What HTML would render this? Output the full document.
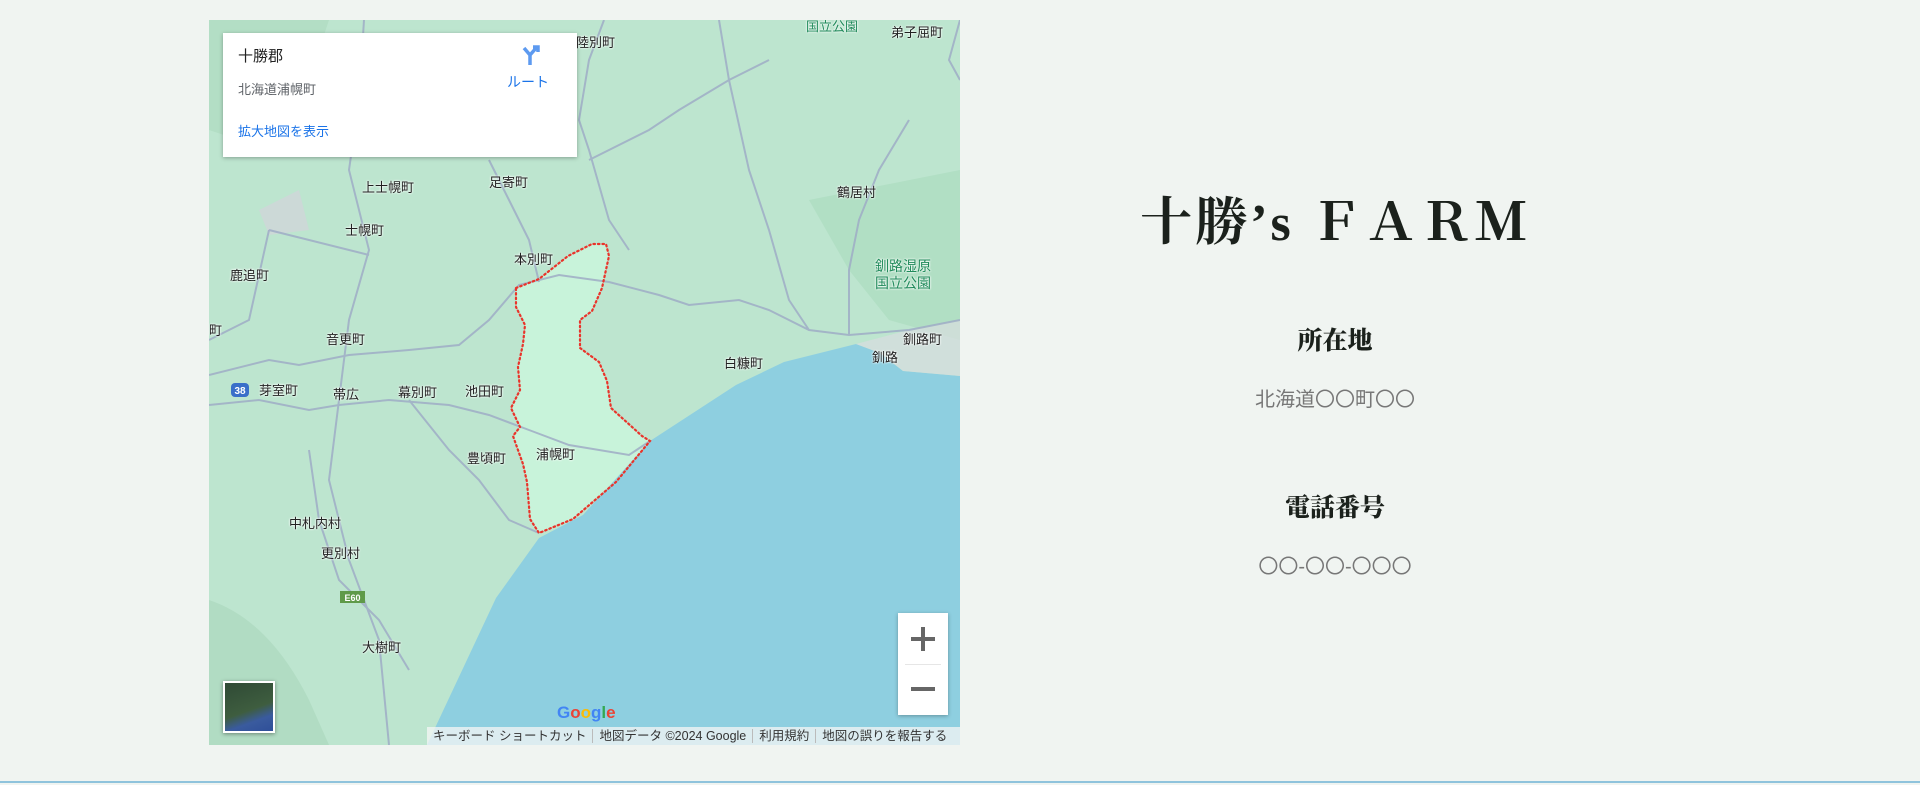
<!DOCTYPE html>
<html><head><meta charset="utf-8"><style>
html,body{margin:0;padding:0}
body{width:1920px;height:785px;background:#f0f4f1;position:relative;overflow:hidden;font-family:"Liberation Sans","Noto Sans CJK JP",sans-serif}
#map{position:absolute;left:209px;top:20px;width:751px;height:725px;overflow:hidden;background:#bde5cf}
.card{position:absolute;left:14px;top:13px;width:354px;height:124px;background:#fff;box-shadow:0 1px 4px rgba(0,0,0,.3)}
.t{position:absolute;font-size:13px;color:#222;white-space:nowrap;text-shadow:0 0 2px #fff,0 0 2px #fff}
.zoom{position:absolute;left:689px;top:593px;width:50px;height:102px;background:#fff;box-shadow:0 1px 4px rgba(0,0,0,.3)}
.layer{position:absolute;left:14px;top:661px;width:48px;height:48px;border:2px solid #fff;box-shadow:0 1px 4px rgba(0,0,0,.4);background:linear-gradient(160deg,#2f4a35 0%,#3e5d3f 55%,#3a5b9e 75%,#2f4f99 100%)}
.foot{position:absolute;left:218px;top:707px;right:0;height:18px;background:rgba(245,245,245,.75);font-size:12.5px;color:#333;line-height:18px;white-space:nowrap}
.foot span{padding:0 6px;border-left:1px solid #bbb}
.foot span:first-child{border-left:none}
.right{position:absolute;left:1075px;width:520px;text-align:center}
h1{margin:0;font-family:"Liberation Serif","Noto Serif CJK JP",serif;font-weight:bold;font-size:52px;color:#1b211c;letter-spacing:3px}
h2{margin:0;font-family:"Liberation Serif","Noto Serif CJK JP",serif;font-weight:900;font-size:25px;color:#1b211c}
p{margin:0;font-size:20px;color:#777}
</style></head><body>
<div id="map">
<svg width="751" height="725" viewBox="0 0 751 725" style="position:absolute;left:0;top:0">
<rect width="751" height="725" fill="#bde5cf"/>
<path d="M0 580 Q60 600 100 680 L120 725 L0 725Z" fill="#a9d6bb" opacity=".6"/>
<path d="M0 0 L120 0 L100 60 L30 120 L0 110Z" fill="#a9d8bc" opacity=".5"/>
<path d="M600 180 L751 150 L751 320 L680 300 L640 250Z" fill="#a6d9ba" opacity=".5"/>
<path d="M307 268 L330 259 L359 236 L383 224 L397 224 L400 236 L393 268 L383 291 L371 300 L371 328 L390 342 L398 361 L402 388 L433 416 L441 421 L407 462 L364 499 L330 513 L321 499 L318 462 L314 444 L304 416 L311 407 L302 388 L311 370 L309 347 L314 324 L316 305 L307 287Z" fill="#c8f3da"/>
<path d="M218 725 L287 578 L330 518 L374 495 L441 421 L527 365 L575 342 L647 324 L671 333 L694 351 L751 356 L751 725Z" fill="#8ecfe0"/>
<path d="M647 324 L671 333 L694 351 L751 356 L751 300 L700 310Z" fill="#d8dde0" opacity=".7"/>
<path d="M50 190 L90 170 L100 210 L60 215Z" fill="#cfd6d8" opacity=".8"/>
<g fill="none" stroke="#9fadc6" stroke-width="2" opacity=".85">
<path d="M0 355 L60 340 L90 345 L140 335 L200 330 L250 325 L280 300 L310 265 L350 255 L400 262 L450 275 L480 285 L530 280 L560 290 L600 310 L640 315 L700 310 L751 300"/>
<path d="M0 385 L50 380 L100 390 L130 385 L180 380 L240 385 L280 395 L320 410 L360 425 L420 435 L441 421"/>
<path d="M155 0 L150 80 L140 150 L160 230 L140 300 L130 380 L120 460 L140 540 L170 620 L180 725"/>
<path d="M280 140 L300 180 L320 220 L330 262"/>
<path d="M60 210 L160 235"/>
<path d="M60 210 L40 300 L0 320"/>
<path d="M200 380 L240 430 L270 460 L300 500 L330 513"/>
<path d="M395 0 L380 40 L370 100 L380 130 L400 200 L420 230"/>
<path d="M560 40 L520 60 L470 90 L440 110 L380 140"/>
<path d="M510 0 L520 60 L540 150 L560 210 L580 280 L600 310"/>
<path d="M700 100 L670 150 L650 200 L640 250 L640 315"/>
<path d="M751 0 L740 40 L751 60"/>
<path d="M100 430 L110 500 L130 560 L170 600 L200 650"/>
</g>
<g fill="none" stroke="#e9342b" stroke-width="2.2" stroke-dasharray="1.5 3" stroke-linecap="round">
<path d="M307 268 L330 259 L359 236 L383 224 L397 224 L400 236 L393 268 L383 291 L371 300 L371 328 L390 342 L398 361 L402 388 L433 416 L441 421 L407 462 L364 499 L330 513 L321 499 L318 462 L314 444 L304 416 L311 407 L302 388 L311 370 L309 347 L314 324 L316 305 L307 287Z"/>
</g>
<rect x="22" y="363" width="18" height="14" rx="4" fill="#3a6fc9"/>
<text x="31" y="374" font-size="10" fill="#fff" text-anchor="middle" font-family="Liberation Sans" font-weight="bold">38</text>
<rect x="131" y="571" width="25" height="12" fill="#5f9a49"/>
<text x="143.5" y="581" font-size="9" fill="#fff" text-anchor="middle" font-family="Liberation Sans" font-weight="bold">E60</text>
<text x="348" y="698" font-size="17" font-family="Liberation Sans" font-weight="bold"><tspan fill="#4285f4">G</tspan><tspan fill="#ea4335">o</tspan><tspan fill="#fbbc05">o</tspan><tspan fill="#4285f4">g</tspan><tspan fill="#34a853">l</tspan><tspan fill="#ea4335">e</tspan></text>
</svg>
<div class="t" style="left:367px;top:12px">陸別町</div>
<div class="t" style="left:682px;top:2px">弟子屈町</div>
<div class="t" style="left:597px;top:-4px;color:#1f8a5a">国立公園</div>
<div class="t" style="left:153px;top:157px">上士幌町</div>
<div class="t" style="left:280px;top:152px">足寄町</div>
<div class="t" style="left:628px;top:162px">鶴居村</div>
<div class="t" style="left:136px;top:200px">士幌町</div>
<div class="t" style="left:21px;top:245px">鹿追町</div>
<div class="t" style="left:305px;top:229px">本別町</div>
<div class="t" style="left:666px;top:238px;color:#1f8a5a;font-size:14px;line-height:17px">釧路湿原<br>国立公園</div>
<div class="t" style="left:0;top:300px">町</div>
<div class="t" style="left:117px;top:309px">音更町</div>
<div class="t" style="left:515px;top:333px">白糠町</div>
<div class="t" style="left:694px;top:309px">釧路町</div>
<div class="t" style="left:663px;top:327px">釧路</div>
<div class="t" style="left:50px;top:360px">芽室町</div>
<div class="t" style="left:124px;top:364px">帯広</div>
<div class="t" style="left:189px;top:362px">幕別町</div>
<div class="t" style="left:256px;top:361px">池田町</div>
<div class="t" style="left:258px;top:428px">豊頃町</div>
<div class="t" style="left:327px;top:424px">浦幌町</div>
<div class="t" style="left:80px;top:493px">中札内村</div>
<div class="t" style="left:112px;top:523px">更別村</div>
<div class="t" style="left:153px;top:617px">大樹町</div>
<div class="card">
<div style="position:absolute;left:15px;top:12px;font-size:15px;color:#222">十勝郡</div>
<div style="position:absolute;left:15px;top:46px;font-size:13px;color:#5f6368">北海道浦幌町</div>
<div style="position:absolute;left:15px;top:88px;font-size:13px;color:#1a73e8">拡大地図を表示</div>
<svg style="position:absolute;left:298px;top:10px" width="24" height="24" viewBox="0 0 24 24"><path d="M9 22 V12 L3 5 M9 12 L16 4 M12 4 H17 V9" fill="none" stroke="#5d9af0" stroke-width="3.5"/></svg>
<div style="position:absolute;left:284px;top:39px;font-size:14px;color:#1a73e8">ルート</div>
</div>
<div class="zoom">
<div style="position:absolute;left:13px;top:24px;width:24px;height:4px;background:#666"></div>
<div style="position:absolute;left:23px;top:14px;width:4px;height:24px;background:#666"></div>
<div style="position:absolute;left:7px;top:51px;width:36px;height:1px;background:#e6e6e6"></div>
<div style="position:absolute;left:13px;top:74px;width:24px;height:4px;background:#666"></div>
</div>
<div class="layer"></div>
<div class="foot"><span>キーボード ショートカット</span><span>地図データ ©2024 Google</span><span>利用規約</span><span>地図の誤りを報告する</span></div>
</div>
<div class="right" style="top:180px"><h1>十勝’s ＦＡＲＭ</h1></div>
<div class="right" style="top:321px"><h2>所在地</h2></div>
<div class="right" style="top:383px"><p>北海道〇〇町〇〇</p></div>
<div class="right" style="top:488px"><h2>電話番号</h2></div>
<div class="right" style="top:550px"><p>〇〇-〇〇-〇〇〇</p></div>
<div style="position:absolute;left:0;top:781px;width:1920px;height:2px;background:#8fc3dc"></div>
</body></html>
